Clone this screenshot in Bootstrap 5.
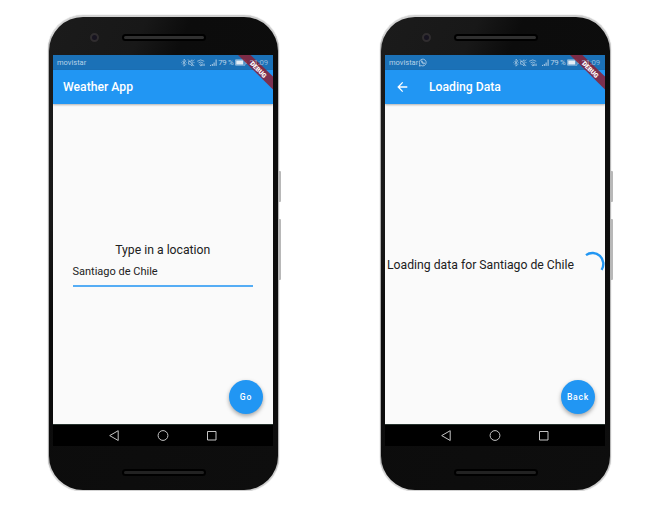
<!DOCTYPE html>
<html lang="en">
<head>
<meta charset="utf-8">
<meta name="viewport" content="width=device-width, initial-scale=1">
<title>Weather App</title>
<link href="https://cdn.jsdelivr.net/npm/bootstrap@5.3.0/dist/css/bootstrap.min.css" rel="stylesheet">
<style>
body{background:#fff;font-family:Roboto,sans-serif;color:#212121;overflow:hidden}
.stage{padding:15px 0 0 48px;gap:101px}
.phone{width:231px;height:476px;border-radius:35px 35px 34px 34px;padding:1.5px 1px 1.5px 1px;background:linear-gradient(90deg,#aaa,#d4d4d4 2%,#ccc 98%,#b5b5b5);box-shadow:0 0 1px #999}
.shell{border-radius:34px;padding:0 4px;background:linear-gradient(115deg,#1b1b1b 0,#181818 22%,#0c0c0c 32%,#0e0e0e 100%)}
.top-bezel{height:38.5px}
.bottom-bezel{height:43px}
.speaker{width:84px;height:7px;border-radius:4px;background:#303030;border:2px solid #000}
.top-bezel .speaker{margin-left:69px;margin-top:4px}
.bottom-bezel .speaker{margin-left:69px;margin-top:9px;background:#222}
.cam{width:9px;height:9px;border-radius:50%;background:#171420;border:2px solid #302d2f;left:41.5px;top:18px}
.key{right:-2px;width:2px;background:#b8b8b8;border-radius:0 1px 1px 0}
.key-a{top:156px;height:31px}
.key-b{top:204px;height:61px}
.screen{width:220px;height:391px;background:#fafafa;overflow:hidden}
.status{height:15px;background:#1b71b7;color:#b7d2e8;font-size:7.5px;line-height:15px;padding-left:4px}
.status svg text{font-size:7.8px;fill:#b7d2e8}
.appbar{height:34px;background:#2196f3;color:#fff;font-size:12.2px;font-weight:500;padding-left:10px;box-shadow:0 1px 2px rgba(0,0,0,.3)}
.appbar svg{margin-left:2px;margin-right:21px}
.heading{font-size:12.23px;line-height:16px}
.form-area{padding:138px 20px 0 19.5px}
.entry{font-size:11px;line-height:15px;margin-top:6px;padding-bottom:6px}
.underline{height:2px;background:#55adf5}
.loading-row{padding:145px 0 0 2px}
.fab{width:34px;height:34px;border-radius:50%;right:10px;bottom:10px;background:#2196f3;color:#fff;font-size:8.6px;font-weight:500;letter-spacing:.8px;box-shadow:0 2px 4px rgba(0,0,0,.35)}
.navkeys{height:22px;background:#000;border-top:1px solid #26322d}
.ribbon{right:0;top:0}
.ribbon text{font-size:6.4px;font-weight:900;fill:#fff}
.ribbon .clock{font-size:7.8px;font-weight:400;fill:#b7d2e8;fill-opacity:.75}
</style>
<script src="https://cdn.jsdelivr.net/npm/bootstrap@5.3.0/dist/js/bootstrap.bundle.min.js"></script>
</head>
<body>
<svg width="0" height="0" class="position-absolute" aria-hidden="true">
  <defs>
    <g id="status-icons" fill="none" stroke="#b7d2e8" stroke-width=".7">
      <path d="M1.3 5.8l3.5 3.6-1.8 1.8V4.2l1.8 1.7-3.5 3.5M.4 7.6h.6M5 7.6h.6"/>
      <path d="M7.6 6.5h1.5l2-1.7v6.2l-2-1.8H7.6zM7 4.5l6.2 6.6M12.2 5.9l1.2-1.1M12.4 7.6h1.1"/>
      <path d="M16.2 6.3q3.5-2.8 7 0M17.5 7.9q2.2-1.7 4.4 0M18.7 9.5l1.1-.7 1.3 1.1-1.2 1.2zM21.9 8.6v2.4M23.2 8.6v2.4"/>
      <path d="M29.5 10.9v-1M31.3 10.9V9M33.1 10.9V7.5M35.1 10.9V4.5" stroke-width="1"/>
      <path d="M54.6 4.8h9.4v5.4h-9.4z"/>
      <path d="M55.2 5.4h7.2v4.2h-7.2z" fill="#e5eef6" stroke="none"/>
      <path d="M65.3 6.2v2.6" stroke-width="1.1"/>
    </g>
    <g id="nav-icons" fill="none" stroke="#c4c4c4" stroke-width="1">
      <path d="M65.2 5.7v9.8l-8.5-4.9z"/>
      <circle cx="110" cy="10.5" r="4.9"/>
      <path d="M154.5 6.5h8.5v8.5h-8.5z"/>
    </g>
    <path id="ribbon-band" d="M0 0h12.5L35 21.5V34.5z" fill="#8c1f33" fill-opacity=".86"/>
  </defs>
</svg>
<main class="stage d-flex">
  <section class="phone position-relative">
    <div class="shell h-100 d-flex flex-column">
      <div class="top-bezel d-flex align-items-center"><div class="speaker"></div></div>
      <div class="screen position-relative d-flex flex-column">
        <div class="status d-flex justify-content-between">
          <span>movistar</span>
          <svg width="92" height="15"><use href="#status-icons"/><text x="37.2" y="10.4" textLength="15.6">79 %</text></svg>
        </div>
        <header class="appbar d-flex align-items-center">Weather App</header>
        <div class="form-area flex-grow-1">
          <div class="heading text-center">Type in a location</div>
          <div class="entry">Santiago de Chile</div>
          <div class="underline"></div>
        </div>
        <div class="position-relative"><div class="fab position-absolute d-flex align-items-center justify-content-center">Go</div></div>
        <svg class="navkeys d-block" width="220" height="22"><use href="#nav-icons"/></svg>
        <svg class="ribbon position-absolute" width="35" height="35"><use href="#ribbon-band"/><text class="clock" x="11.5" y="10.4" textLength="18.7">21:09</text><text transform="translate(20.4 14.6) rotate(45)" x="0" y="2.2" text-anchor="middle" textLength="20">DEBUG</text></svg>
      </div>
      <div class="bottom-bezel d-flex align-items-center"><div class="speaker"></div></div>
    </div>
    <i class="cam position-absolute"></i><i class="key key-a position-absolute"></i><i class="key key-b position-absolute"></i>
  </section>
  <section class="phone position-relative">
    <div class="shell h-100 d-flex flex-column">
      <div class="top-bezel d-flex align-items-center"><div class="speaker"></div></div>
      <div class="screen position-relative d-flex flex-column">
        <div class="status d-flex">
          <span>movistar</span>
          <svg width="9" height="15" fill="none" stroke="#b7d2e8" stroke-width=".8"><path d="M1.3 11.1l.5-1.9a3.4 3.4 0 1 1 1.5 1.4zM3.3 6.1q.4 2.5 2.8 3l.7-.8-1-.6-.6.4-1-1 .3-.6-.5-.9z"/></svg>
          <svg class="ms-auto" width="92" height="15"><use href="#status-icons"/><text x="37.2" y="10.4" textLength="15.6">79 %</text></svg>
        </div>
        <header class="appbar d-flex align-items-center"><svg width="11" height="12" fill="none" stroke="#fff" stroke-width="1.3"><path d="M10.3 6H1.2M5.7 1.4L1.2 6l4.5 4.6"/></svg>Loading Data</header>
        <div class="loading-row flex-grow-1 d-flex align-items-start">
          <div class="heading text-nowrap mt-2">Loading data for Santiago de Chile</div>
          <svg class="ms-auto flex-shrink-0" width="22" height="26" fill="none" stroke="#2196f3" stroke-width="2.4"><path d="M3 6.1A10.9 10.9 0 0 1 18.6 20.8"/></svg>
        </div>
        <div class="position-relative"><div class="fab position-absolute d-flex align-items-center justify-content-center">Back</div></div>
        <svg class="navkeys d-block" width="220" height="22"><use href="#nav-icons"/></svg>
        <svg class="ribbon position-absolute" width="35" height="35"><use href="#ribbon-band"/><text class="clock" x="11.5" y="10.4" textLength="18.7">21:09</text><text transform="translate(20.4 14.6) rotate(45)" x="0" y="2.2" text-anchor="middle" textLength="20">DEBUG</text></svg>
      </div>
      <div class="bottom-bezel d-flex align-items-center"><div class="speaker"></div></div>
    </div>
    <i class="cam position-absolute"></i><i class="key key-a position-absolute"></i><i class="key key-b position-absolute"></i>
  </section>
</main>
</body>
</html>
